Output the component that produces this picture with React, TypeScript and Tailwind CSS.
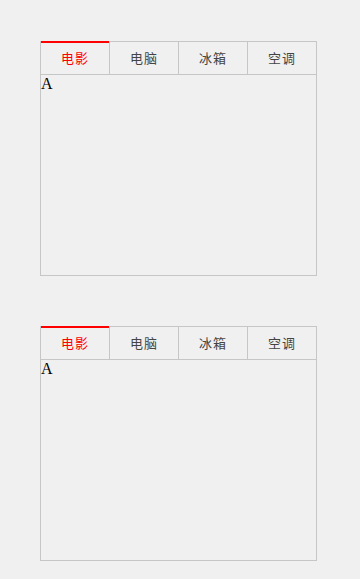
const tabs = ['电影', '电脑', '冰箱', '空调'];

function TabBox() {
  return (
    <div className="flex h-[235px] w-[277px] flex-col border border-[#c6c6c6]">
      <div className="flex h-[33px] shrink-0 border-b border-[#c6c6c6]">
        {tabs.map((t, i) => (
          <div
            key={t}
            className={
              i === 0
                ? 'relative flex w-[69px] items-center justify-center border-r border-[#c6c6c6] text-[13px] tracking-[1px] text-[#ff0000]'
                : i < 3
                  ? 'flex w-[69px] items-center justify-center border-r border-[#c6c6c6] text-[13px] tracking-[1px] text-[#444]'
                  : 'flex w-[68px] items-center justify-center text-[13px] tracking-[1px] text-[#444]'
            }
          >
            {i === 0 && <div className="absolute -top-px right-0 left-0 h-[2px] bg-[#ff0000]" />}
            {t}
          </div>
        ))}
      </div>
      <div className="font-['Liberation_Serif',serif] text-[16px] leading-[18px] text-black">A</div>
    </div>
  );
}

export default function App() {
  return (
    <div className="flex h-[579px] w-[360px] flex-col gap-[50px] bg-[#f0f0f0] pt-[41px] pl-[40px] font-['Noto_Sans_CJK_SC',sans-serif]">
      <TabBox />
      <TabBox />
    </div>
  );
}
